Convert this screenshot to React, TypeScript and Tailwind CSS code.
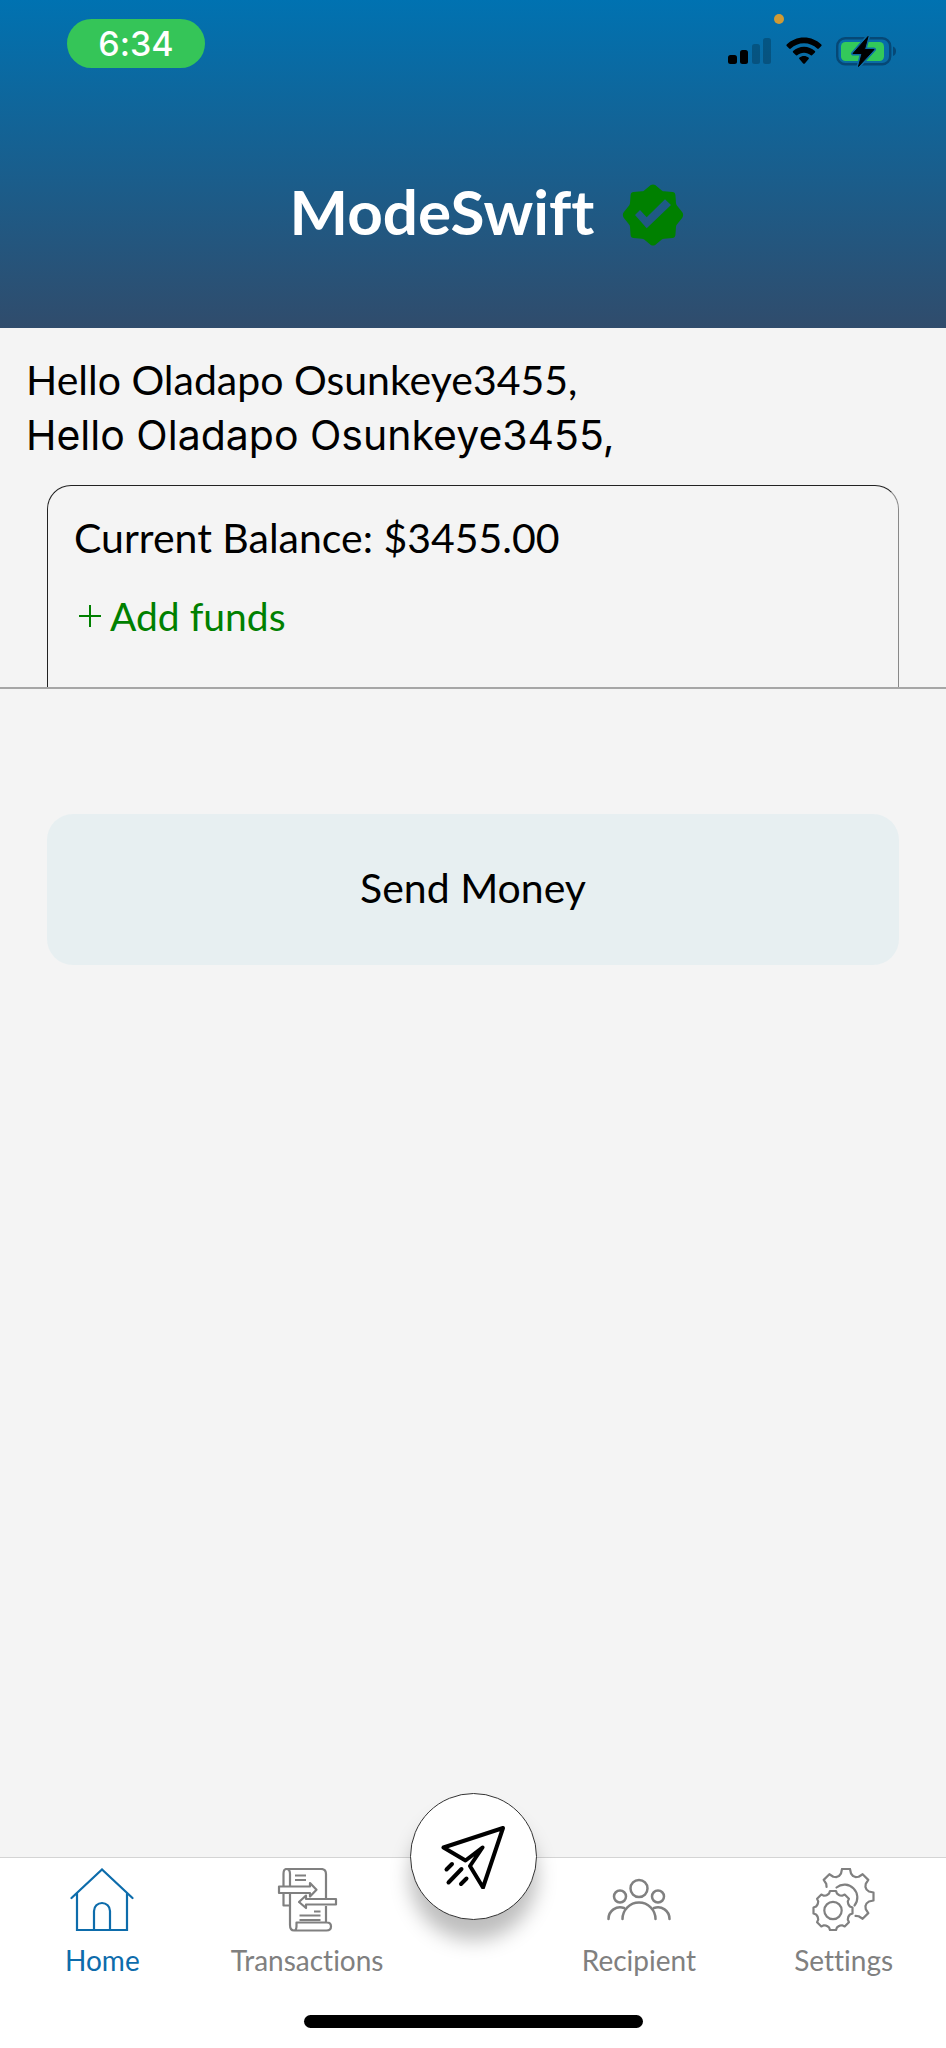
import React from "react";

type IconProps = { className?: string };

function toothPoints(cx: number, cy: number, outer: number, root: number, half: number, deg: number) {
  const a = (deg * Math.PI) / 180;
  const at = (r: number, w: number) =>
    `${(cx + r * Math.cos(a) - w * Math.sin(a)).toFixed(2)} ${(cy + r * Math.sin(a) + w * Math.cos(a)).toFixed(2)}`;
  const shoulder = root + (outer - root) * 0.35;
  return { start: at(root, -half - 2), rise: at(shoulder, -half), top: at(outer, -half + 1), end: at(outer, half - 1), fall: at(shoulder, half), close: at(root, half + 2) };
}

function gearPath(cx: number, cy: number, outer: number, root: number, half: number, angles: number[], closed: boolean) {
  const parts = angles.map((deg, i) => {
    const t = toothPoints(cx, cy, outer, root, half, deg);
    const join = i === 0 ? `M${t.start}` : `A${root} ${root} 0 0 1 ${t.start}`;
    return `${join}L${t.rise}L${t.top}L${t.end}L${t.fall}L${t.close}`;
  });
  if (closed) {
    parts.push(`A${root} ${root} 0 0 1 ${toothPoints(cx, cy, outer, root, half, angles[0]).start}Z`);
  }
  return parts.join("");
}

function SignalIcon() {
  return (
    <svg className="h-[28px] w-[44px]" viewBox="0 0 44 28" aria-hidden="true">
      <rect x="0" y="18" width="9" height="9" rx="2.5" />
      <rect x="12" y="13" width="8" height="14" rx="2.5" />
      <rect x="24" y="7" width="8" height="20" rx="2.5" opacity="0.22" />
      <rect x="35" y="1" width="8" height="26" rx="2.5" opacity="0.22" />
    </svg>
  );
}

function WifiIcon() {
  return (
    <svg className="h-[28px] w-[36px]" viewBox="0 0 36 28" aria-hidden="true">
      <path d="M18 0.5c6.8 0 12.900 2.700 17.300 7 .5.5.5 1.100 0 1.600l-2.500 2.500c-.5.5-1.100.5-1.600 0C27.700 8.300 23.100 6.300 18 6.300S8.300 8.300 4.800 11.600c-.5.5-1.100.5-1.600 0L.7 9.100c-.5-.5-.5-1.100 0-1.600C5.100 3.200 11.200.5 18 .5z" />
      <path d="M18 9.800c4.200 0 8 1.600 10.900 4.200.5.500.5 1.100 0 1.600l-2.600 2.500c-.5.5-1 .5-1.500.1-1.800-1.600-4.200-2.500-6.800-2.500s-5 .9-6.800 2.500c-.5.4-1 .4-1.500-.1l-2.600-2.500c-.5-.5-.5-1.100 0-1.600C10 11.400 13.800 9.800 18 9.800z" />
      <path d="M18 19c1.700 0 3.300.6 4.500 1.600.5.5.5 1.100.1 1.500l-3.800 4.300c-.5.5-1.100.5-1.600 0l-3.800-4.300c-.4-.4-.4-1 .1-1.500C14.700 19.600 16.300 19 18 19z" />
    </svg>
  );
}

function BatteryIcon() {
  return (
    <svg className="h-[32px] w-[62px]" viewBox="0 0 62 32" aria-hidden="true">
      <rect x="1.200" y="3.200" width="53" height="26" rx="8" fill="none" stroke="#064876" strokeWidth="2.400" />
      <path d="M57 11.500c2 .6 3 2.400 3 4.700s-1 4.100-3 4.700z" fill="#064876" />
      <rect x="5" y="7" width="43" height="19" rx="4.500" fill="#33c95a" />
      <path d="M32 1.500 17 18.500h9L22.500 31.500 38 14.500h-9.500z" stroke="#0b6ba4" strokeWidth="4" strokeLinejoin="round" />
      <path d="M32 1.500 17 18.500h9L22.500 31.500 38 14.500h-9.500z" stroke="#000" strokeWidth="1" strokeLinejoin="round" />
    </svg>
  );
}

function VerifiedIcon() {
  return (
    <svg className="size-[62px]" viewBox="0 0 62 62" role="img" aria-label="Verified">
      <path
        fill="#008000"
        fillRule="evenodd"
        d="M28.800 1.100q2.200-1.400 4.400 0l6.600 5.300q1 .8 2.300.9l8.300.6q2.700.2 3 3l.6 8.200q.1 1.300.9 2.300l5.400 6.900q1.700 2.700 0 5.400l-5.400 6.900q-.8 1-.9 2.300l-.6 8.200q-.3 2.800-3 3l-8.300.6q-1.300.1-2.300.9l-6.600 5.300q-2.200 1.400-4.400 0l-6.600-5.300q-1-.8-2.300-.9l-8.300-.6q-2.700-.2-3-3L8 42.900q-.1-1.300-.9-2.300L1.700 33.700q-1.700-2.700 0-5.400l5.400-6.900q.8-1 .9-2.300l.6-8.200q.3-2.800 3-3l8.300-.6q1.300-.1 2.300-.9zM13 31l11.700 13.300L49 21l-6-5.700-18.300 18L18 26z"
      />
    </svg>
  );
}

function HomeIcon({ className }: IconProps) {
  return (
    <svg className={className} viewBox="0 0 63 64" fill="none" stroke="currentColor" strokeWidth="2.200" strokeLinecap="round" aria-hidden="true">
      <path d="M1 30 31.500 1.500 62 30M6.500 25.500V62h50V25.500M23.500 62V43a8 8 0 0 1 16 0v19" />
    </svg>
  );
}

function TransactionsIcon({ className }: IconProps) {
  return (
    <svg className={className} viewBox="-1 0 60 64" fill="none" stroke="currentColor" strokeWidth="2.200" strokeLinejoin="round" aria-hidden="true">
      <path d="M12 18V6q0-5-3.500-5Q5.500 1 5.500 6v12M5.500 26v11.500H12M8.500 1H43q5 0 5 5v24M12 26v31q0 5.500 4 5.500h32.500q4.500 0 4.500-4t-4-4H18.500v3.500q0 4.500-2.500 4.500M48 38v16" />
      <path d="M1 18.500h31V15l6.500 6.700L32 28.500V25H1zM58 31H28v-3.500L21 34l7 6v-3.500h30z" />
      <path d="M17 7.500h11M17 12h11M36 43.500h6.500M21.500 47.500h21M21.500 52h21" />
    </svg>
  );
}

function RecipientIcon({ className }: IconProps) {
  return (
    <svg className={className} viewBox="0 0 64 64" fill="none" stroke="currentColor" strokeWidth="2.500" strokeLinecap="round" aria-hidden="true">
      <circle cx="32" cy="20.500" r="8.500" />
      <circle cx="13" cy="28.500" r="6" />
      <circle cx="51" cy="28.500" r="6" />
      <path d="M15.500 51a16.500 16.500 0 0 1 33 0M1.500 51c0-8.500 8-13.500 15.500-11M62.500 51c0-8.500-8-13.500-15.500-11" />
    </svg>
  );
}

function SettingsIcon({ className }: IconProps) {
  return (
    <svg className={className} viewBox="1 0 64 64" fill="none" stroke="currentColor" strokeWidth="2.200" strokeLinejoin="round" strokeLinecap="round" aria-hidden="true">
      <path d={gearPath(35, 28.500, 27.500, 20.500, 5, [-135, -90, -45, 0, 45], false)} />
      <path d="M25.500 19.500a12.800 12.800 0 0 1 18 18" />
      <path d={gearPath(22, 42.500, 19.500, 15.500, 4, [0, 45, 90, 135, 180, 225, 270, 315], true)} />
      <circle cx="22" cy="42.500" r="8.700" />
    </svg>
  );
}

function SendIcon() {
  return (
    <svg className="size-[64px]" viewBox="0 0 64 64" fill="none" stroke="#000" strokeWidth="4" strokeLinecap="round" strokeLinejoin="round" aria-hidden="true">
      <path d="M2.500 22.500 62 3 42 62.500 29 41 41.500 22.500 24.500 35.500z" />
      <path d="m11 39-5.500 5.500M20.500 44 7.500 57.500M25.500 53.500 20 59" />
    </svg>
  );
}

function Tab({ label, active, Icon }: { label: string; active?: boolean; Icon: React.FC<IconProps> }) {
  return (
    <a
      href="#"
      aria-current={active ? "page" : undefined}
      className={`flex min-w-0 flex-1 flex-col items-center pt-[10px] ${active ? "text-[#0d6cab]" : "text-[#808080]"}`}
    >
      <Icon className="h-[64px] w-[64px]" />
      <span className="mt-3 text-[28px] leading-8">{label}</span>
    </a>
  );
}

export default function App() {
  return (
    <div className="flex min-h-screen flex-col bg-[#f4f4f4] font-['Lato',sans-serif] text-black [font-variant-ligatures:none]">
      <header className="flex h-[328px] flex-col bg-linear-to-b/srgb from-[#0072b1] to-[#304c6c]">
        <div className="relative flex items-start justify-between pt-[19px] pr-[48px] pl-[67px]">
          <time className="flex h-[49px] w-[138px] items-center justify-center rounded-full bg-[#35c558] font-['Inter',sans-serif] text-[34px] font-medium text-white">
            6:34
          </time>
          <div className="flex items-center gap-[14px] pt-4">
            <SignalIcon />
            <WifiIcon />
            <BatteryIcon />
          </div>
          <span className="absolute top-[14px] right-[162px] size-[10px] rounded-full bg-[#cf9a35]" />
        </div>
        <div className="mt-[104px] flex items-start justify-center gap-7 pl-7">
          <h1 className="text-[62px] leading-[78px] font-bold text-white">ModeSwift</h1>
          <div className="pt-[12px]">
            <VerifiedIcon />
          </div>
        </div>
      </header>

      <main className="flex-1">
        <section className="border-b-2 border-[#a6a6a6] pt-[26px]">
          <div className="px-[26px]">
            <p className="text-[41px] leading-[52px]">Hello Oladapo Osunkeye3455,</p>
            <p className="font-['Inter',sans-serif] text-[41px] leading-[58px]">Hello Oladapo Osunkeye3455,</p>
          </div>
          <div className="mx-[47px] mt-[21px] h-[202px] rounded-t-3xl border-x border-t border-t-[#222] border-r-[#888] border-l-[#222] px-[26px] pt-[25px]">
            <p className="text-[41px] leading-[54px]">Current Balance: $3455.00</p>
            <button className="mt-6 flex items-center gap-2 pl-1 text-[39px] leading-[54px] text-[#008000]">
              <svg className="size-6" viewBox="0 0 24 24" fill="none" stroke="currentColor" strokeWidth="2" aria-hidden="true">
                <path d="M1 12h22M12 1v22" />
              </svg>
              Add funds
            </button>
          </div>
        </section>
        <div className="px-[47px] pt-[125px]">
          <button className="h-[151px] w-full rounded-[26px] bg-[#e7eff1] pb-1 text-[41px]">Send Money</button>
        </div>
      </main>

      <nav className="border-t border-[#d4d4d4] bg-white pb-[20px]">
        <div className="flex h-[157px]">
          <Tab label="Home" active Icon={HomeIcon} />
          <Tab label="Transactions" Icon={TransactionsIcon} />
          <button
            aria-label="Send"
            className="-mt-[65px] flex size-[127px] shrink-0 items-center justify-center rounded-full border border-[#333] bg-white shadow-[0_20px_20px_rgba(0,0,0,0.26)]"
          >
            <SendIcon />
          </button>
          <Tab label="Recipient" Icon={RecipientIcon} />
          <Tab label="Settings" Icon={SettingsIcon} />
        </div>
        <div className="mx-auto h-[13px] w-[339px] rounded-full bg-black" />
      </nav>
    </div>
  );
}
